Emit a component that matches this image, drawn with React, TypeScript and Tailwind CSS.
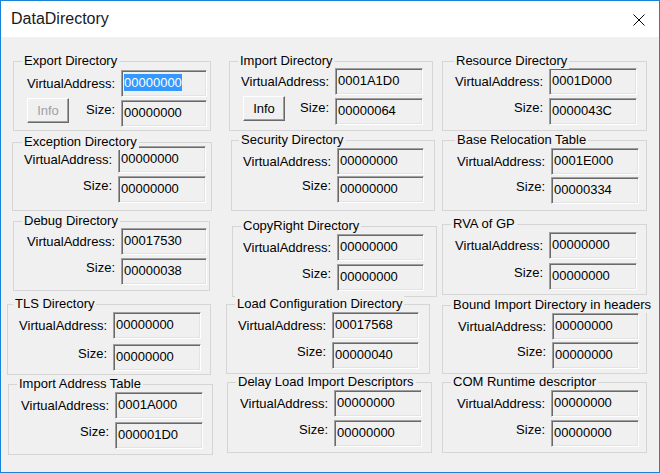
import React from "react";

type Group = {
  title: string;
  va: string;
  size: string;
  box: string; // margin + size of the group frame
  titleX: string;
  pt: string;
  lead: string;
  gap: string;
  tw: string;
  info?: "on" | "off";
  selected?: boolean;
};

const col1: Group[] = [
  { title: "Export Directory", va: "00000000", size: "00000000", box: "ml-[12px] mt-[24px] w-[198px] h-[70px]", titleX: "left-[8px]", pt: "pt-[8px]", lead: "w-[107px]", gap: "gap-[3px]", tw: "w-[86px]", info: "off", selected: true },
  { title: "Exception Directory", va: "00000000", size: "00000000", box: "ml-[11px] mt-[11px] w-[200px] h-[69px]", titleX: "left-[9px]", pt: "pt-[3px]", lead: "w-[105px]", gap: "gap-[3px]", tw: "w-[88px]" },
  { title: "Debug Directory", va: "00017530", size: "00000038", box: "ml-[12px] mt-[10px] w-[197px] h-[70px]", titleX: "left-[8px]", pt: "pt-[6px]", lead: "w-[107px]", gap: "gap-[3px]", tw: "w-[86px]" },
  { title: "TLS Directory", va: "00000000", size: "00000000", box: "ml-[6px] mt-[13px] w-[204px] h-[71px]", titleX: "left-[5px]", pt: "pt-[7px]", lead: "w-[105px]", gap: "gap-[5px]", tw: "w-[88px]" },
  { title: "Import Address Table", va: "0001A000", size: "000001D0", box: "ml-[7px] mt-[9px] w-[205px] h-[71px]", titleX: "left-[8px]", pt: "pt-[7px]", lead: "w-[106px]", gap: "gap-[3px]", tw: "w-[88px]" },
];

const col2: Group[] = [
  { title: "Import Directory", va: "0001A1D0", size: "00000064", box: "ml-[9px] mt-[24px] w-[204px] h-[70px]", titleX: "left-[8px]", pt: "pt-[6px]", lead: "w-[105px]", gap: "gap-[3px]", tw: "w-[88px]", info: "on" },
  { title: "Security Directory", va: "00000000", size: "00000000", box: "ml-[11px] mt-[9px] w-[204px] h-[71px]", titleX: "left-[7px]", pt: "pt-[7px]", lead: "w-[105px]", gap: "gap-[1px]", tw: "w-[87px]" },
  { title: "CopyRight Directory", va: "00000000", size: "00000000", box: "ml-[12px] mt-[15px] w-[205px] h-[71px]", titleX: "left-[8px]", pt: "pt-[7px]", lead: "w-[104px]", gap: "gap-[3px]", tw: "w-[87px]" },
  { title: "Load Configuration Directory", va: "00017568", size: "00000040", box: "ml-[6px] mt-[7px] w-[204px] h-[70px]", titleX: "left-[8px]", pt: "pt-[7px]", lead: "w-[105px]", gap: "gap-[3px]", tw: "w-[87px]" },
  { title: "Delay Load Import Descriptors", va: "00000000", size: "00000000", box: "ml-[7px] mt-[8px] w-[205px] h-[71px]", titleX: "left-[8px]", pt: "pt-[7px]", lead: "w-[106px]", gap: "gap-[3px]", tw: "w-[88px]" },
];

const col3: Group[] = [
  { title: "Resource Directory", va: "0001D000", size: "0000043C", box: "ml-[4px] mt-[24px] w-[205px] h-[70px]", titleX: "left-[11px]", pt: "pt-[6px]", lead: "w-[106px]", gap: "gap-[3px]", tw: "w-[88px]" },
  { title: "Base Relocation Table", va: "0001E000", size: "00000334", box: "ml-[4px] mt-[9px] w-[205px] h-[71px]", titleX: "left-[12px]", pt: "pt-[7px]", lead: "w-[108px]", gap: "gap-[2px]", tw: "w-[88px]" },
  { title: "RVA of GP", va: "00000000", size: "00000000", box: "ml-[4px] mt-[13px] w-[205px] h-[71px]", titleX: "left-[8px]", pt: "pt-[7px]", lead: "w-[106px]", gap: "gap-[4px]", tw: "w-[88px]" },
  { title: "Bound Import Directory in headers", va: "00000000", size: "00000000", box: "ml-[4px] mt-[10px] w-[205px] h-[69px]", titleX: "left-[8px]", pt: "pt-[7px]", lead: "w-[109px]", gap: "gap-[2px]", tw: "w-[87px]" },
  { title: "COM Runtime descriptor", va: "00000000", size: "00000000", box: "ml-[4px] mt-[8px] w-[205px] h-[71px]", titleX: "left-[8px]", pt: "pt-[7px]", lead: "w-[108px]", gap: "gap-[3px]", tw: "w-[88px]" },
];

function Field({ value, w, selected }: { value: string; w: string; selected?: boolean }) {
  return (
    <div
      className={`${w} h-[27px] shrink-0 border border-t-[#a0a0a0] border-l-[#a0a0a0] border-r-white border-b-white bg-[#f0f0f0] pl-[2px] pt-[4px] leading-[16px] shadow-[inset_1px_1px_0_#696969,inset_-1px_-1px_0_#e3e3e3]`}
    >
      {selected ? <span className="bg-[#3399ff] py-[1px] text-white">{value}</span> : value}
    </div>
  );
}

function InfoButton({ enabled }: { enabled: boolean }) {
  return (
    <div
      className={`-mt-[4px] ml-[13px] flex h-[25px] w-[42px] items-center justify-center border border-t-white border-l-white border-r-[#696969] border-b-[#696969] bg-[#f0f0f0] shadow-[inset_-1px_-1px_0_#a0a0a0] ${
        enabled ? "text-black" : "text-[#a0a0a0]"
      }`}
    >
      Info
    </div>
  );
}

function GroupBox({ g }: { g: Group }) {
  return (
    <div className={`relative shrink-0 border border-[#d5d5d5] ${g.box}`}>
      <span className={`absolute top-[-9px] whitespace-nowrap bg-[#f0f0f0] px-[2px] leading-[16px] ${g.titleX}`}>
        {g.title}
      </span>
      <div className={`flex flex-col ${g.pt} ${g.gap}`}>
        <div className="flex">
          <div className={`${g.lead} shrink-0 pr-[6px] pt-[6px] text-right leading-[16px]`}>VirtualAddress:</div>
          <Field value={g.va} w={g.tw} selected={g.selected} />
        </div>
        <div className="flex">
          <div className={`${g.lead} flex shrink-0 items-start justify-between pr-[6px] pt-[2px] leading-[16px]`}>
            {g.info ? <InfoButton enabled={g.info === "on"} /> : <span />}
            <span>Size:</span>
          </div>
          <Field value={g.size} w={g.tw} />
        </div>
      </div>
    </div>
  );
}

export default function App() {
  return (
    <div className="flex h-[473px] w-[660px] flex-col overflow-hidden border border-[#1883d7] bg-[#f0f0f0] font-['Liberation_Sans',Arial,sans-serif] text-[13px] text-black">
      <div className="flex h-[36px] shrink-0 items-center justify-between bg-white pl-[10px] pr-[14px]">
        <span className="text-[16px] text-[#1a1a1a]">DataDirectory</span>
        <svg width="12" height="12" viewBox="0 0 12 12" className="mt-[1px]">
          <path d="M0.5 0.5 L11.5 11.5 M11.5 0.5 L0.5 11.5" stroke="#000" strokeWidth="1" fill="none" />
        </svg>
      </div>
      <div className="flex flex-1">
        <div className="flex w-[219px] shrink-0 flex-col">
          {col1.map((g) => (
            <GroupBox key={g.title} g={g} />
          ))}
        </div>
        <div className="flex w-[218px] shrink-0 flex-col">
          {col2.map((g) => (
            <GroupBox key={g.title} g={g} />
          ))}
        </div>
        <div className="flex flex-1 flex-col">
          {col3.map((g) => (
            <GroupBox key={g.title} g={g} />
          ))}
        </div>
      </div>
    </div>
  );
}
